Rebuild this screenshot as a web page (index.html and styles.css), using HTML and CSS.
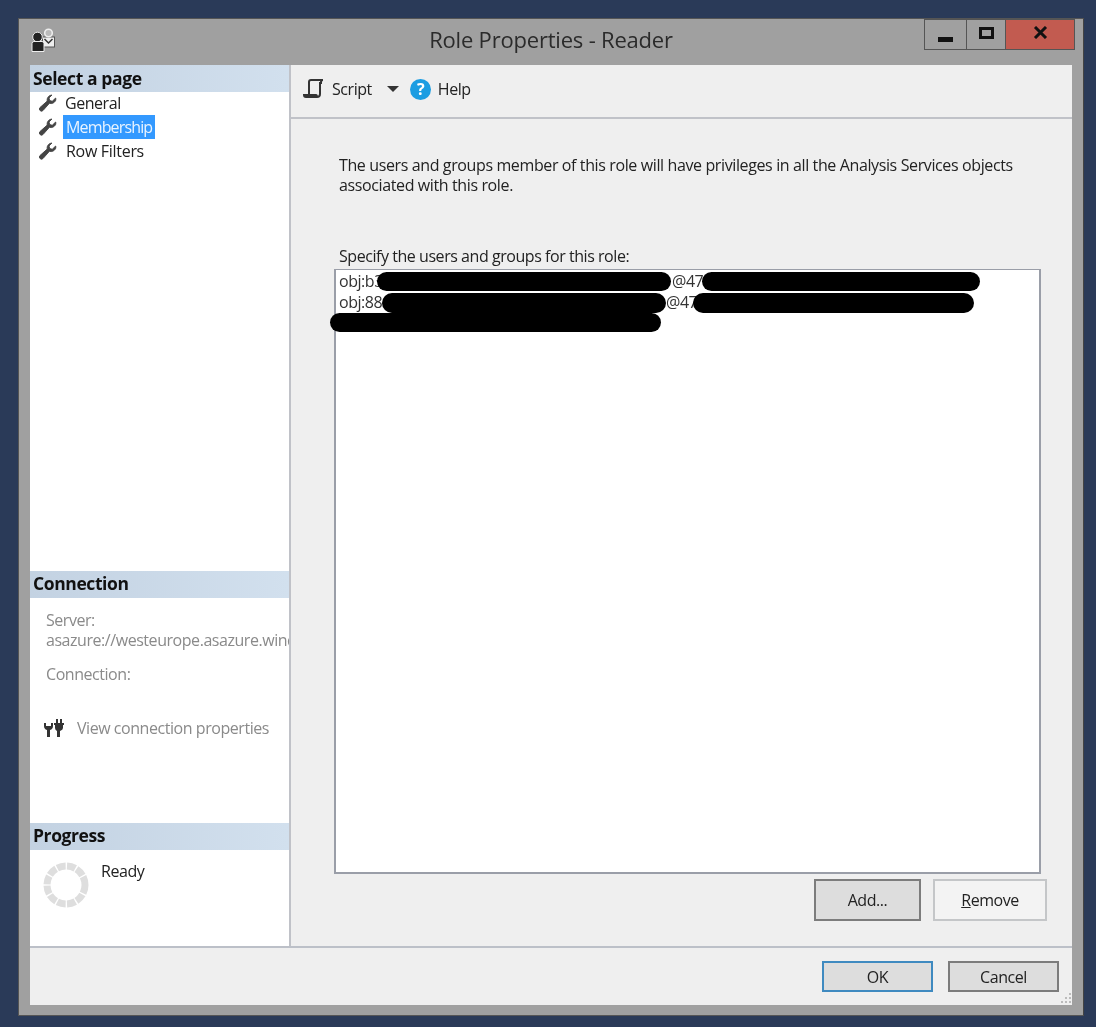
FILE: index.html
```html
<!DOCTYPE html>
<html lang="en">
<head>
<meta charset="utf-8">
<title>Role Properties - Reader</title>
<link rel="stylesheet" href="styles.css">
</head>
<body>
<div class="window">
  <header class="titlebar">
    <svg class="app-icon" width="26" height="26" viewBox="0 0 26 26">
      <rect x="11.500" y="10" width="12" height="10" fill="#eee" stroke="#555" stroke-width="1"/>
      <path d="M13.500 12l4 4 4-4" fill="none" stroke="#333" stroke-width="1.500"/>
      <circle cx="17.500" cy="6" r="3.800" fill="#bbb" stroke="#eee" stroke-width="1.600"/>
      <circle cx="6.500" cy="10" r="4.800" fill="#222" stroke="#eee" stroke-width="1"/>
      <path d="M1 24.500v-8q0-2 2-2h8q2 0 2 2v8z" fill="#222" stroke="#eee" stroke-width="1"/>
    </svg>
    <div class="title">Role Properties - Reader</div>
    <div class="controls">
      <div class="ctl ctl-min"><span class="min-glyph"></span></div>
      <div class="ctl ctl-max"><span class="max-glyph"></span></div>
      <div class="ctl ctl-close">
        <svg width="15" height="13" viewBox="0 0 15 13"><path d="M2 1l11 11M13 1L2 12" stroke="#111" stroke-width="3" fill="none"/></svg>
      </div>
    </div>
  </header>

  <div class="client">
    <div class="main">
      <aside class="sidebar">
        <section class="sec-pages">
          <h2 class="sec-head">Select a page</h2>
          <ul class="pages">
            <li class="page">
              <svg class="wrench" width="19" height="19" viewBox="0 0 19 19"><path d="M18 4.500a5 5 0 0 1-6.600 4.800L5 16.500a2.100 2.100 0 1 1-3-3l7.200-6.400A5 5 0 0 1 14 1l-3 3 .8 2.600 2.500.7 3.200-3.200z"/></svg>
              <span class="page-label">General</span>
            </li>
            <li class="page">
              <svg class="wrench" width="19" height="19" viewBox="0 0 19 19"><path d="M18 4.500a5 5 0 0 1-6.600 4.800L5 16.500a2.100 2.100 0 1 1-3-3l7.200-6.400A5 5 0 0 1 14 1l-3 3 .8 2.600 2.500.7 3.200-3.200z"/></svg>
              <span class="page-label selected">Membership</span>
            </li>
            <li class="page">
              <svg class="wrench" width="19" height="19" viewBox="0 0 19 19"><path d="M18 4.500a5 5 0 0 1-6.600 4.800L5 16.500a2.100 2.100 0 1 1-3-3l7.200-6.400A5 5 0 0 1 14 1l-3 3 .8 2.600 2.500.7 3.200-3.200z"/></svg>
              <span class="page-label row-filters">Row Filters</span>
            </li>
          </ul>
        </section>
        <section class="sec-conn">
          <h2 class="sec-head">Connection</h2>
          <div class="conn-body">
            <div class="muted">Server:</div>
            <div class="muted nowrap">asazure://westeurope.asazure.windows.net</div>
            <div class="muted conn-label">Connection:</div>
            <div class="conn-link">
              <svg width="22" height="20" viewBox="0 0 22 20"><path d="M1 5v3q0 3 3 4v7h3v-7q3-1 3-4V5H8v3H3V5z" fill="#333"/><path d="M13 1h2v4h2V1h2v4h2v2h-1v3q0 2-3 3v6h-3v-6q-2-1-2-3V7h-1V5h2z" fill="#333"/></svg>
              <span class="muted">View connection properties</span>
            </div>
          </div>
        </section>
        <section class="sec-progress">
          <h2 class="sec-head">Progress</h2>
          <div class="progress-body">
            <svg width="46" height="46" viewBox="0 0 46 46"><circle cx="23" cy="23" r="19" fill="none" stroke="#dedede" stroke-width="7" stroke-dasharray="8.600 1.400"/></svg>
            <span class="ready">Ready</span>
          </div>
        </section>
      </aside>

      <main class="content">
        <div class="toolbar">
          <svg class="script-icon" width="22" height="22" viewBox="0 0 22 22"><path d="M6 17V4q0-2 2-2h12M20 2q-2 0-2 2v2M17 4v12q0 3-3 3H3q-2 0-2-2h12q1 0 1 2" fill="none" stroke="#333" stroke-width="2"/></svg>
          <span class="tb-text">Script</span>
          <span class="caret"></span>
          <svg width="21" height="21" viewBox="0 0 21 21"><circle cx="10.500" cy="10.500" r="10.500" fill="#1b9de2"/><text x="10.500" y="16" text-anchor="middle" class="q">?</text></svg>
          <span class="tb-text">Help</span>
        </div>
        <div class="pane">
          <p class="intro">The users and groups member of this role will have privileges in all the Analysis Services objects<br>associated with this role.</p>
          <label class="list-label">Specify the users and groups for this role:</label>
          <div class="listbox">
            <div class="item">obj:b3</div>
            <div class="item">obj:88</div>
            <span class="redact r1"></span>
            <span class="at a1">@47</span>
            <span class="redact r2"></span>
            <span class="redact r3"></span>
            <span class="at a2">@47</span>
            <span class="redact r4"></span>
            <span class="redact r5"></span>
          </div>
          <div class="list-actions">
            <button class="btn btn-add">Add...</button>
            <button class="btn btn-remove"><u>R</u>emove</button>
          </div>
        </div>
      </main>
    </div>
    <footer class="footer">
      <button class="btn btn-ok">OK</button>
      <button class="btn btn-cancel">Cancel</button>
      <svg class="grip" width="12" height="12" viewBox="0 0 12 12"><path d="M9 1h2v2H9zM9 5h2v2H9zM9 9h2v2H9zM5 5h2v2H5zM5 9h2v2H5zM1 9h2v2H1z" fill="#bbb"/></svg>
    </footer>
  </div>
</div>
</body>
</html>
```

FILE: styles.css
```css
* { box-sizing: border-box; }
html, body { margin: 0; height: 100%; }
body {
  background: #2a3a58;
  padding: 18px 12px 11px 18px;
  font-family: "Open Sans", "Noto Sans", sans-serif;
  font-size: 16px;
  letter-spacing: -0.45px;
  color: #1c1c1c;
  overflow: hidden;
}
.window {
  height: 998px;
  background: #a0a0a0;
  border: 1px solid #555;
  border-right-color: #444;
  padding: 0 11px 10px 11px;
  display: flex;
  flex-direction: column;
  filter: blur(0.4px);
}
.titlebar {
  height: 46px;
  flex: none;
  display: flex;
  align-items: flex-start;
  position: relative;
}
.app-icon { margin: 8px 0 0 1px; }
.title {
  position: absolute;
  left: 0; right: 0; top: 5px;
  text-align: center;
  font-size: 22px;
  letter-spacing: -0.2px;
  color: #2b2b2b;
}
.controls {
  margin-left: auto;
  margin-right: -3px;
  display: flex;
  height: 31px;
}
.ctl {
  height: 31px;
  border: 1px solid #555;
  border-top-color: #555;
  border-left: 0;
  display: flex;
  align-items: center;
  justify-content: center;
}
.ctl-min { width: 43px; border-left: 1px solid #555; }
.ctl-max { width: 39px; }
.ctl-close { width: 69px; background: #c25b50; }
.min-glyph { width: 15px; height: 5px; background: #111; margin-top: 10px; }
.max-glyph { width: 15px; height: 12px; border: 3px solid #111; margin-top: -4px; }
.ctl-close svg { margin-top: -4px; }
.client {
  flex: 1;
  min-height: 0;
  display: flex;
  flex-direction: column;
  background: #efefef;
}
.main { flex: 1; min-height: 0; display: flex; border-bottom: 2px solid #bcc0c8; }
.sidebar {
  width: 261px;
  flex: none;
  background: #fff;
  border-right: 2px solid #c0c2c8;
  display: flex;
  flex-direction: column;
}
.sec-head {
  margin: 0;
  height: 27px;
  padding: 0 0 0 3px;
  font-size: 17.500px;
  line-height: 26px;
  font-weight: 700;
  letter-spacing: -0.4px;
  color: #111;
  background: linear-gradient(90deg, #c3d2e2, #d2e0ee);
}
.sec-conn .sec-head, .sec-progress .sec-head { line-height: 24px; }
.sec-pages { flex: 1; min-height: 0; }
.pages { list-style: none; margin: -1px 0 0; padding: 0; }
.page { height: 24px; display: flex; align-items: center; padding-left: 8px; }
.wrench { flex: none; fill: #444; stroke: #444; stroke-width: 0.9; }
.page-label { margin-left: 8px; line-height: 24px; color: #222; }
.page-label.selected {
  background: #3399ff;
  color: #eaf4ff;
  margin-left: 6px;
  padding: 0 3px;
  letter-spacing: -0.85px;
}
.page-label.row-filters { margin-left: 9px; letter-spacing: -0.3px; }
.sec-conn { height: 252px; flex: none; overflow: hidden; }
.conn-body { padding: 11px 0 0 16px; }
.muted { color: #8a8a8a; }
.nowrap { white-space: nowrap; line-height: 18px; }
.conn-label { margin-top: 14px; }
.conn-link { display: flex; align-items: center; gap: 12px; margin-top: 32px; margin-left: -3px; }
.sec-progress { height: 123px; flex: none; }
.progress-body { display: flex; align-items: flex-start; padding: 12px 0 0 13px; }
.ready { margin: -2px 0 0 12px; color: #222; }
.content { flex: 1; min-width: 0; display: flex; flex-direction: column; }
.toolbar {
  height: 54px;
  flex: none;
  border-bottom: 2px solid #c0c2c8;
  display: flex;
  align-items: center;
  padding: 0 0 4px 12px;
}
.tb-text { margin-left: 7px; color: #222; }
.caret {
  width: 0; height: 0;
  margin: 0 11px 0 15px;
  border-left: 6px solid transparent;
  border-right: 6px solid transparent;
  border-top: 6px solid #333;
}
.q { font: 700 16px "Open Sans", sans-serif; fill: #fff; }
.pane { flex: 1; min-height: 0; display: flex; flex-direction: column; padding: 36px 31px 0 43px; }
.intro { margin: 0; line-height: 20px; white-space: nowrap; padding-left: 5px; letter-spacing: -0.38px; color: #222; }
.list-label { margin-top: 50px; line-height: 22px; padding-left: 5px; color: #222; }
.listbox {
  margin-top: 2px;
  height: 605px;
  flex: none;
  background: #fff;
  border: 2px solid #9a9ea8;
  border-width: 1px 2px 2px 2px;
  position: relative;
  padding: 1px 0 0 3px;
}
.item { line-height: 21px; color: #333; white-space: nowrap; }
.redact { position: absolute; background: #000; height: 20px; border-radius: 10px; }
.at { position: absolute; line-height: 22px; color: #333; }
.r1 { left: 41px; top: 2px; width: 294px; height: 19px; }
.a1 { left: 336px; top: 0; }
.r2 { left: 366px; top: 2px; width: 278px; height: 19px; }
.r3 { left: 46px; top: 23px; width: 284px; }
.a2 { left: 330px; top: 21px; }
.r4 { left: 357px; top: 23px; width: 281px; }
.r5 { left: -6px; top: 43px; width: 331px; height: 19px; }
.list-actions { display: flex; justify-content: flex-end; gap: 12px; margin-top: 5px; margin-right: -6px; }
.btn {
  font: inherit;
  letter-spacing: inherit;
  color: #222;
  background: #dddddd;
  border: 2px solid #7c7c7c;
  padding: 0;
}
.btn-add { width: 107px; height: 42px; }
.btn-remove { width: 114px; height: 42px; background: #f3f3f3; border-color: #c4c6c8; }
.footer {
  height: 57px;
  flex: none;
  position: relative;
  display: flex;
  justify-content: flex-end;
  gap: 15px;
  padding: 13px 13px 0 0;
  align-items: flex-start;
}
.btn-ok { width: 111px; height: 31px; border-color: #3f8ac0; }
.btn-cancel { width: 111px; height: 31px; }
.grip { position: absolute; right: 0; bottom: 1px; }
```
